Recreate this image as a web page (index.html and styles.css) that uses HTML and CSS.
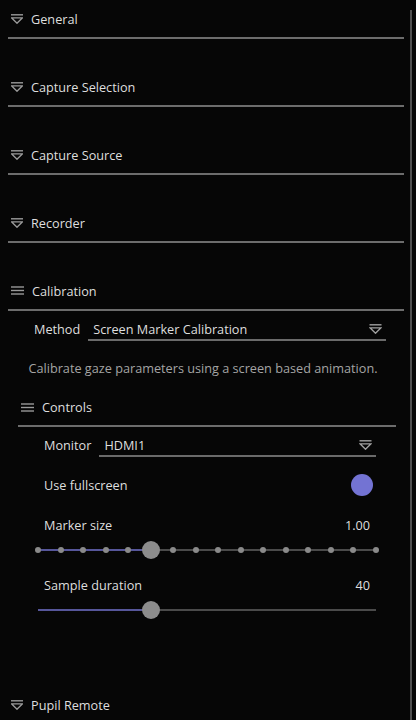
FILE: index.html
```html
<!DOCTYPE html>
<html>
<head>
<meta charset="utf-8">
<link rel="stylesheet" href="styles.css">
</head>
<body>
<div class="panel">
  <div class="scrollbar"></div>
  <div class="menu">
    <section class="section">
      <div class="header">
        <svg class="icon" width="12" height="10" viewBox="0 0 12 10"><line x1="0" y1="0.8" x2="12" y2="0.8"/><polygon points="0.7,3.9 11.3,3.9 6,9.2"/></svg>
        <span>General</span>
      </div>
    </section>
    <section class="section">
      <div class="header">
        <svg class="icon" width="12" height="10" viewBox="0 0 12 10"><line x1="0" y1="0.8" x2="12" y2="0.8"/><polygon points="0.7,3.9 11.3,3.9 6,9.2"/></svg>
        <span>Capture Selection</span>
      </div>
    </section>
    <section class="section">
      <div class="header">
        <svg class="icon" width="12" height="10" viewBox="0 0 12 10"><line x1="0" y1="0.8" x2="12" y2="0.8"/><polygon points="0.7,3.9 11.3,3.9 6,9.2"/></svg>
        <span>Capture Source</span>
      </div>
    </section>
    <section class="section">
      <div class="header">
        <svg class="icon" width="12" height="10" viewBox="0 0 12 10"><line x1="0" y1="0.8" x2="12" y2="0.8"/><polygon points="0.7,3.9 11.3,3.9 6,9.2"/></svg>
        <span>Recorder</span>
      </div>
    </section>
    <section class="section open">
      <div class="header">
        <svg class="icon" width="13" height="9" viewBox="0 0 13 9"><line x1="0" y1="1" x2="13" y2="1"/><line x1="0" y1="4.5" x2="13" y2="4.5"/><line x1="0" y1="8" x2="13" y2="8"/></svg>
        <span>Calibration</span>
      </div>
      <div class="body">
        <div class="row method">
          <span class="label">Method</span>
          <div class="dropdown">
            <span>Screen Marker Calibration</span>
            <svg class="icon" width="13" height="10" viewBox="0 0 12 10"><line x1="0" y1="0.8" x2="12" y2="0.8"/><polygon points="0.7,3.9 11.3,3.9 6,9.2"/></svg>
          </div>
        </div>
        <p class="info">Calibrate gaze parameters using a screen based animation.</p>
        <div class="subsection">
          <div class="header sub">
            <svg class="icon" width="13" height="9" viewBox="0 0 13 9"><line x1="0" y1="1" x2="13" y2="1"/><line x1="0" y1="4.5" x2="13" y2="4.5"/><line x1="0" y1="8" x2="13" y2="8"/></svg>
            <span>Controls</span>
          </div>
          <div class="row ctl">
            <span class="label">Monitor</span>
            <div class="dropdown">
              <span>HDMI1</span>
              <svg class="icon" width="13" height="10" viewBox="0 0 12 10"><line x1="0" y1="0.8" x2="12" y2="0.8"/><polygon points="0.7,3.9 11.3,3.9 6,9.2"/></svg>
            </div>
          </div>
          <div class="row ctl toggle-row">
            <span class="label">Use fullscreen</span>
            <span class="toggle"></span>
          </div>
          <div class="slider-group first">
            <div class="slider-label"><span>Marker size</span><span>1.00</span></div>
            <div class="slider" style="--f:0.3333">
              <div class="track"></div>
              <div class="fill"></div>
              <div class="dots">
                <i></i><i></i><i></i><i></i><i></i><i></i><i></i><i></i><i></i><i></i><i></i><i></i><i></i><i></i><i></i><i></i>
              </div>
              <div class="knob"></div>
            </div>
          </div>
          <div class="slider-group">
            <div class="slider-label"><span>Sample duration</span><span>40</span></div>
            <div class="slider" style="--f:0.3333">
              <div class="track"></div>
              <div class="fill"></div>
              <div class="knob"></div>
            </div>
          </div>
        </div>
      </div>
    </section>
    <section class="section">
      <div class="header">
        <svg class="icon" width="12" height="10" viewBox="0 0 12 10"><line x1="0" y1="0.8" x2="12" y2="0.8"/><polygon points="0.7,3.9 11.3,3.9 6,9.2"/></svg>
        <span>Pupil Remote</span>
      </div>
    </section>
  </div>
</div>
</body>
</html>
```

FILE: styles.css
```css
* { box-sizing: border-box; }
html, body {
  margin: 0;
  padding: 0;
  background: #060606;
}
.panel {
  position: relative;
  width: 416px;
  height: 720px;
  overflow: hidden;
  background: #060606;
  font-family: "Open Sans", "Noto Sans", sans-serif;
  font-size: 12.7px;
  color: #dedede;
}
.scrollbar {
  position: absolute;
  left: 410px;
  top: 10px;
  bottom: 0;
  width: 2px;
  background: #4f4f4f;
}
.menu {
  display: flex;
  flex-direction: column;
  gap: 29px;
  width: 396px;
  margin-left: 8px;
}
.header {
  display: flex;
  align-items: center;
  gap: 8px;
  height: 39px;
  padding: 0 0 0 3px;
  border-bottom: 2px solid #6c6c6c;
}
.header span { line-height: 18px; }
.icon {
  flex: none;
  fill: none;
  stroke: #9a9a9a;
  stroke-width: 1.4;
}
.body {
  display: flex;
  flex-direction: column;
  padding-bottom: 37px;
}
.row {
  display: flex;
  align-items: center;
  height: 36px;
  gap: 8px;
}
.row.method { padding: 0 18px 0 26px; }
.label { flex: none; }
.dropdown {
  flex: 1;
  display: flex;
  align-items: center;
  justify-content: space-between;
  height: 24px;
  padding: 2px 4px 0 5px;
  border-bottom: 2px solid #6a6a6a;
  line-height: 20px;
}
.dropdown .icon { stroke: #a0a0a0; }
.info {
  margin: 0;
  height: 42px;
  line-height: 42px;
  padding-right: 6px;
  text-align: center;
  color: #a4a4a4;
  white-space: nowrap;
}
.subsection {
  display: flex;
  flex-direction: column;
  margin: 0 8px 0 10px;
}
.header.sub {
  height: 38px;
}
.row.ctl { padding: 0 20px 0 26px; }
.toggle-row {
  margin-top: 4px;
  justify-content: space-between;
  padding-right: 23px !important;
}
.toggle {
  width: 22px;
  height: 22px;
  border-radius: 50%;
  background: #7373d3;
}
.slider-group { margin-top: 10px; }
.slider-group.first { margin-top: 7px; }
.slider-label {
  display: flex;
  justify-content: space-between;
  align-items: center;
  height: 30px;
  padding: 0 26px;
}
.slider {
  position: relative;
  height: 20px;
  margin: 0 17px;
  display: flex;
  align-items: center;
}
.track {
  position: absolute;
  left: 3px;
  right: 3px;
  top: 9px;
  height: 2px;
  background: #4a4a4a;
}
.fill {
  position: absolute;
  left: 3px;
  top: 9px;
  height: 2px;
  width: calc(var(--f) * (100% - 6px));
  background: #56569a;
}
.dots {
  position: relative;
  flex: 1;
  display: flex;
  justify-content: space-between;
}
.dots i {
  width: 6px;
  height: 6px;
  border-radius: 50%;
  background: #8a8a8a;
}
.knob {
  position: absolute;
  top: 1px;
  left: calc(3px + var(--f) * (100% - 6px) - 9px);
  width: 18px;
  height: 18px;
  border-radius: 50%;
  background: #8c8c8c;
}
```
